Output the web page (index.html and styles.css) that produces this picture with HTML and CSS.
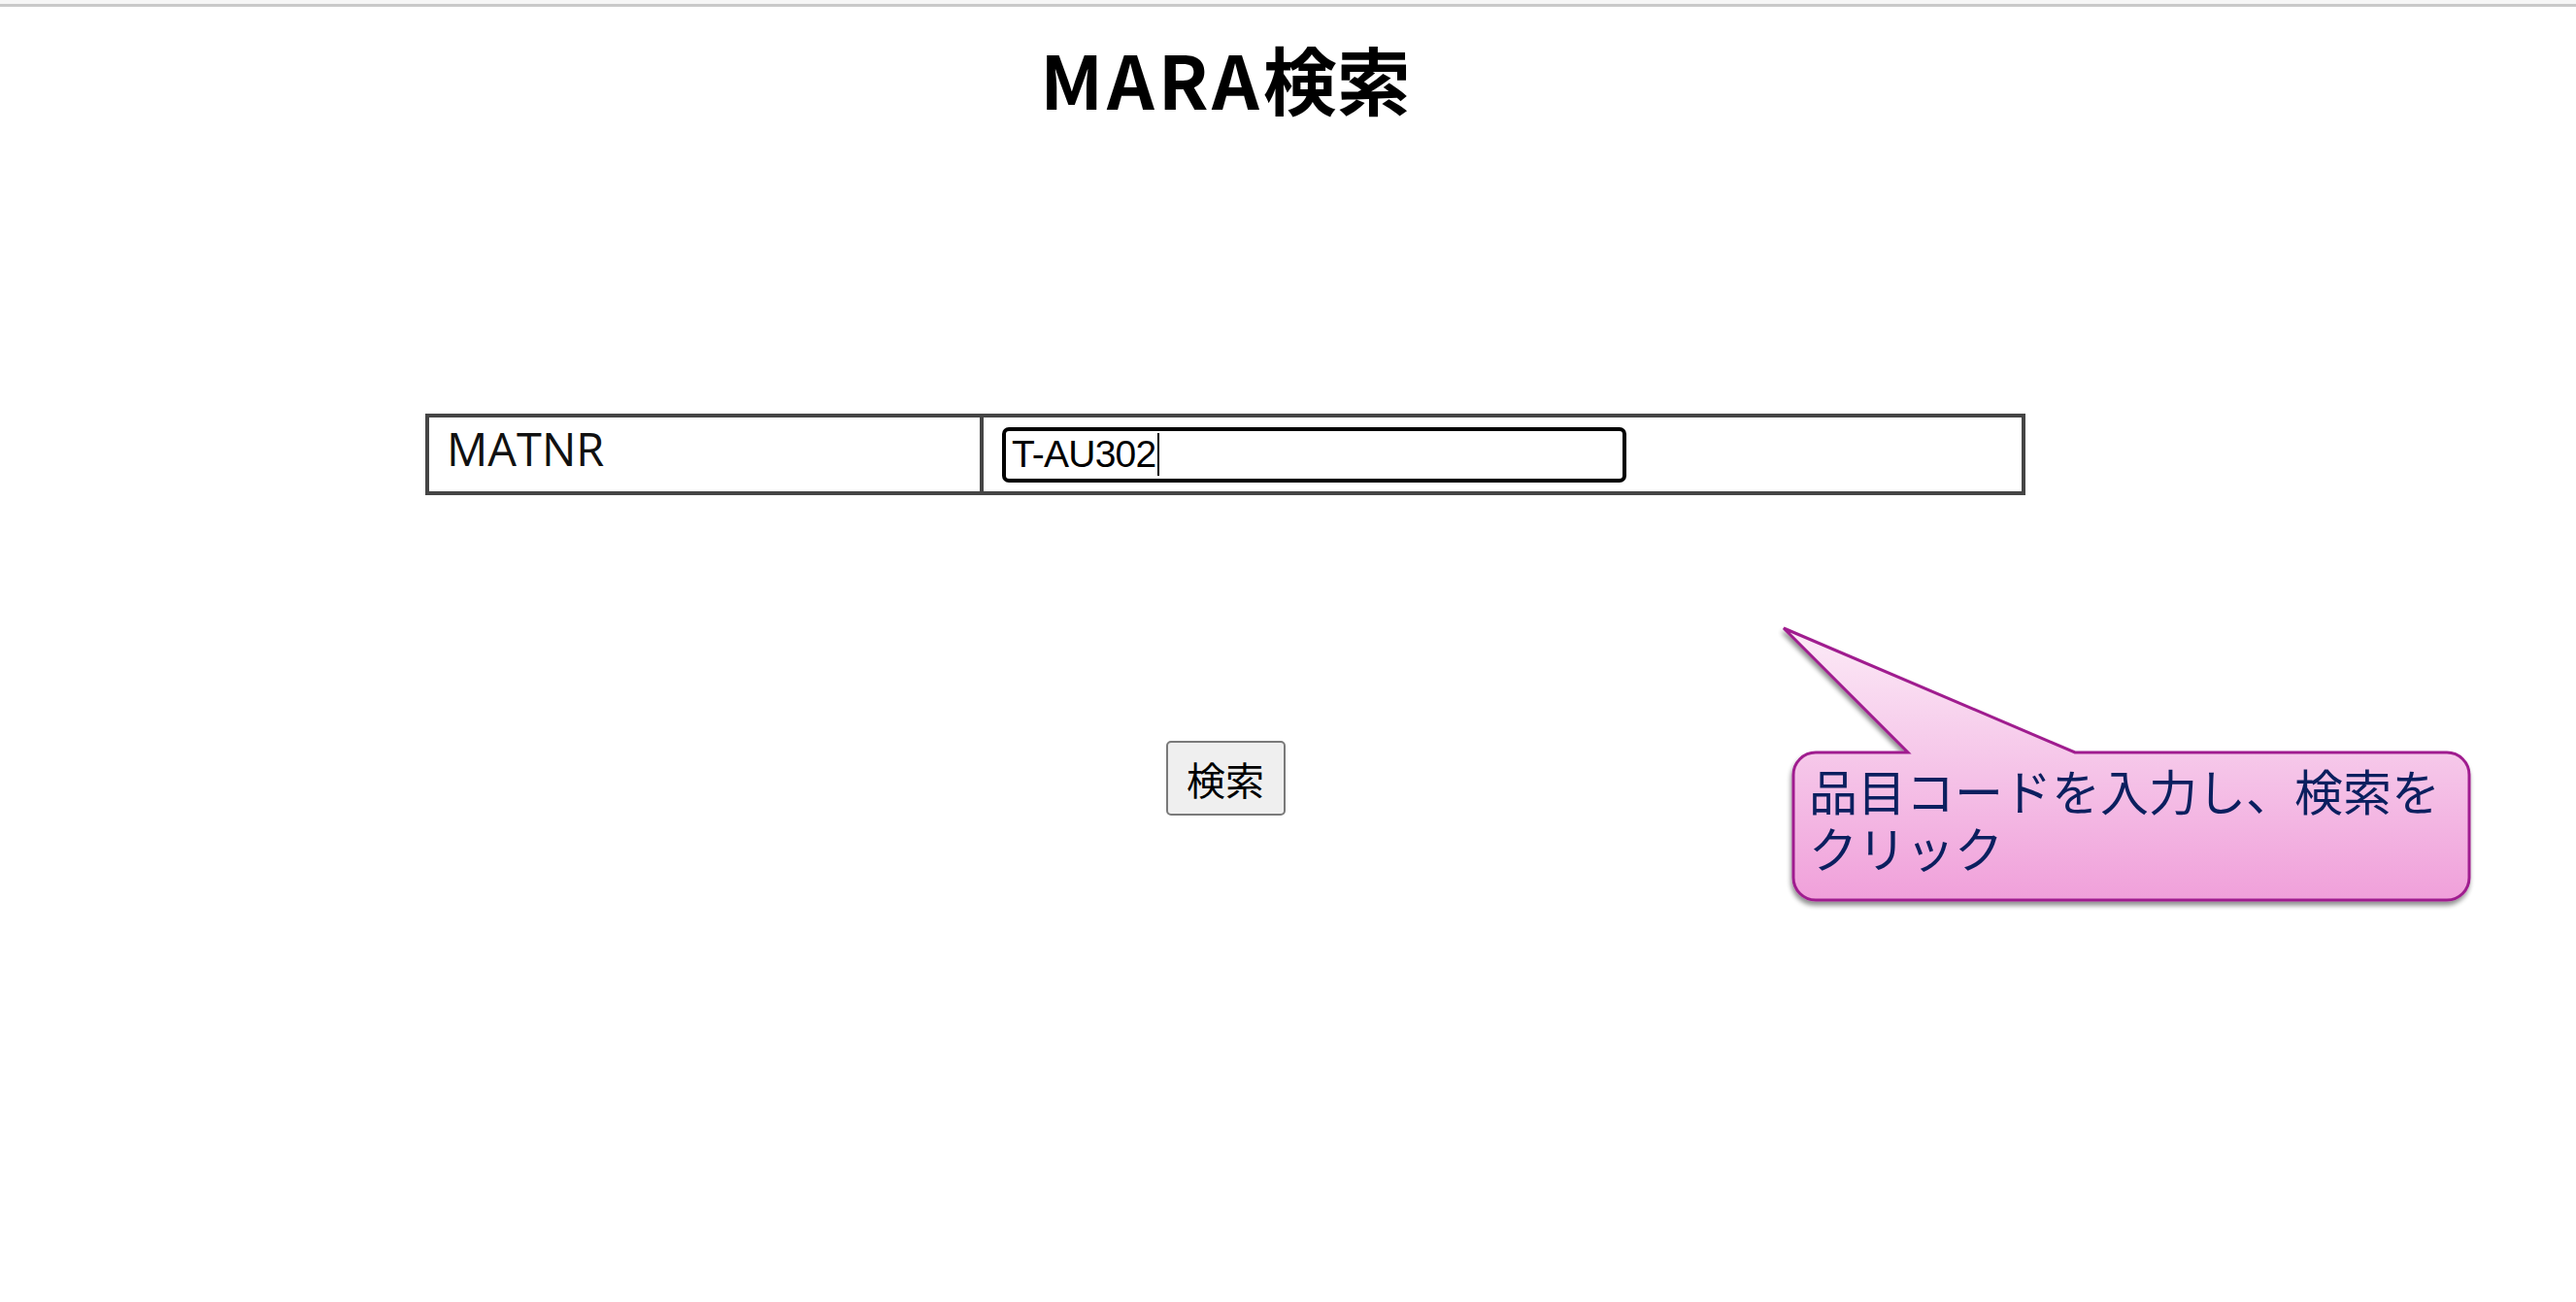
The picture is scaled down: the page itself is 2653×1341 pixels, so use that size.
FILE: index.html
```html
<!DOCTYPE html>
<html lang="ja">
<head>
<meta charset="utf-8">
<title>MARA検索</title>
<link rel="stylesheet" href="styles.css">
</head>
<body>
<div class="chrome-edge"></div>
<main class="page">
  <h1 class="title"><span class="title-latin">MARA</span>検索</h1>
  <table class="form-table">
    <tr>
      <td class="label-cell">MATNR</td>
      <td class="input-cell">
        <div class="text-input"><span class="input-value">T-AU302</span><span class="caret"></span></div>
      </td>
    </tr>
  </table>
  <button class="search-btn" type="button">検索</button>
</main>
<div class="callout">
  <svg class="callout-shape" width="725" height="300" viewBox="0 0 725 300">
    <defs>
      <linearGradient id="cg" x1="0" y1="0" x2="0" y2="1">
        <stop offset="0" stop-color="#fcebf7"/>
        <stop offset="0.45" stop-color="#f6c9ea"/>
        <stop offset="1" stop-color="#f0a0da"/>
      </linearGradient>
      <filter id="sh" x="-5%" y="-5%" width="110%" height="115%">
        <feGaussianBlur in="SourceAlpha" stdDeviation="2.5"/>
        <feOffset dx="-1" dy="4" result="b"/>
        <feComponentTransfer><feFuncA type="linear" slope="0.45"/></feComponentTransfer>
        <feMerge><feMergeNode/><feMergeNode in="SourceGraphic"/></feMerge>
      </filter>
    </defs>
    <path filter="url(#sh)" fill="url(#cg)" stroke="#a01f8f" stroke-width="3" stroke-linejoin="miter"
      d="M7 7 L307 135 L690 135 A23 23 0 0 1 713 158 L713 264 A23 23 0 0 1 690 287 L40 287 A23 23 0 0 1 17 264 L17 158 A23 23 0 0 1 40 135 L135 135 Z"/>
  </svg>
  <p class="callout-text">品目コードを入力し、検索を<br>クリック</p>
</div>
</body>
</html>
```

FILE: styles.css
```css
html, body {
  margin: 0;
  padding: 0;
  background: #ffffff;
}

body {
  font-family: "Noto Sans CJK JP", "Noto Sans", sans-serif;
  color: #000;
  position: relative;
  min-height: 1341px;
  overflow: hidden;
}

.chrome-edge {
  height: 4px;
  background: #f6f6f6;
  border-bottom: 3px solid #c9c9c9;
}

.page {
  width: 2524px;
  display: flex;
  flex-direction: column;
  align-items: center;
}

.title {
  margin: 28px 0 0 0;
  font-family: "Noto Sans CJK JP", sans-serif;
  font-weight: 700;
  font-size: 76px;
  line-height: 91px;
  letter-spacing: 0;
}

.title-latin {
  letter-spacing: 4px;
}

.form-table {
  margin-top: 300px;
  border-collapse: collapse;
  width: 1648px;
  height: 84px;
  border: 4px solid #454545;
}

.form-table td {
  border: 4px solid #454545;
  padding: 0;
  height: 76px;
  box-sizing: border-box;
}

.label-cell {
  width: 571px;
  vertical-align: top;
  padding: 2px 0 0 18px !important;
  font-family: "Open Sans", sans-serif;
  font-size: 47px;
  line-height: 60px;
  color: #111;
}

.input-cell {
  vertical-align: middle;
  padding-left: 19px !important;
}

.text-input {
  box-sizing: border-box;
  width: 643px;
  height: 57px;
  border: 4px solid #000;
  border-radius: 7px;
  padding-left: 6px;
  display: flex;
  align-items: center;
  font-family: "Liberation Sans", Arial, sans-serif;
  font-size: 39px;
  line-height: 44px;
  letter-spacing: -0.8px;
  color: #000;
  overflow: hidden;
}

.caret {
  display: block;
  width: 2px;
  height: 44px;
  background: #000;
  margin-left: 2px;
}

.search-btn {
  margin-top: 253px;
  box-sizing: border-box;
  width: 123px;
  height: 77px;
  background: #efefef;
  border: 2px solid #7a7a7a;
  border-radius: 5px;
  padding: 0;
  font-family: "Noto Sans CJK JP", sans-serif;
  font-size: 40px;
  line-height: 1;
  color: #000;
}

.callout {
  position: absolute;
  left: 1830px;
  top: 640px;
  width: 725px;
  height: 300px;
}

.callout-shape {
  position: absolute;
  left: 0;
  top: 0;
  display: block;
}

.callout-text {
  position: absolute;
  left: 33px;
  top: 144px;
  margin: 0;
  font-family: "Noto Sans CJK JP", sans-serif;
  font-size: 50px;
  line-height: 59px;
  color: #0b1f5f;
  white-space: nowrap;
}
```
